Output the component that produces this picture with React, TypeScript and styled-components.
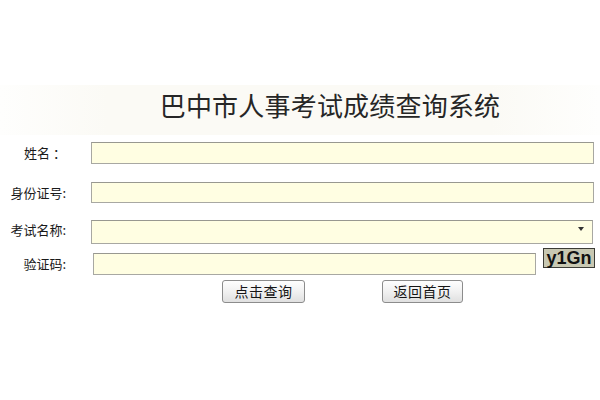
import React from 'react';
import styled, { createGlobalStyle } from 'styled-components';

const GlobalStyle = createGlobalStyle`
  html, body {
    margin: 0;
    padding: 0;
    background: #ffffff;
  }
  body {
    width: 600px;
    height: 400px;
    overflow: hidden;
    font-family: "Noto Sans CJK SC", "Liberation Sans", sans-serif;
    color: #1e1e1e;
  }
`;

const Page = styled.div`
  display: flex;
  flex-direction: column;
  padding-top: 85px;
`;

const Banner = styled.div`
  height: 50px;
  display: flex;
  align-items: center;
  justify-content: center;
  padding-left: 60px;
  background: linear-gradient(
    to right,
    #fefefd 0%,
    #fbfaf5 18%,
    #fbfaf5 82%,
    #fefefd 100%
  );
`;

const Title = styled.h1`
  margin: 0 0 10px;
  font-size: 26px;
  font-weight: 400;
  letter-spacing: 0.2px;
  color: #262626;
  line-height: 30px;
`;

const Form = styled.form`
  display: flex;
  flex-direction: column;
  padding-right: 6px;
`;

const Row = styled.div<{ $top: number }>`
  display: grid;
  grid-template-columns: 66px 1fr;
  column-gap: 25px;
  align-items: center;
  margin-top: ${(p) => p.$top}px;
`;

const Label = styled.label`
  text-align: right;
  font-size: 13px;
  line-height: 16px;
  color: #1a1a1a;
  white-space: nowrap;
`;

const Field = styled.input<{ $h?: number }>`
  box-sizing: border-box;
  width: 100%;
  height: ${(p) => p.$h ?? 22}px;
  margin: 0;
  padding: 0 4px;
  background: #fffee2;
  border: 1px solid #a8a8a2;
  border-top-color: #989890;
  outline: none;
  font-size: 13px;
`;

const SelectWrap = styled.div`
  position: relative;
  width: calc(100% - 1px);
`;

const Select = styled.select`
  box-sizing: border-box;
  width: 100%;
  height: 24px;
  margin: 0;
  padding: 0 4px;
  appearance: none;
  background: #fffee2;
  border: 1px solid #a8a8a2;
  border-top-color: #989890;
  border-radius: 0;
  outline: none;
  font-size: 13px;
`;

const Arrow = styled.span`
  position: absolute;
  right: 9px;
  top: 10px;
  width: 0;
  height: 0;
  border-left: 3px solid transparent;
  border-right: 3px solid transparent;
  border-top: 4px solid #333;
  pointer-events: none;
`;

const CodeLine = styled.div`
  display: flex;
  align-items: flex-start;
  padding-left: 2px;
`;

const CodeField = styled(Field)`
  width: 443px;
`;

const Captcha = styled.span`
  box-sizing: border-box;
  margin: -5px 0 0 7px;
  width: 52px;
  height: 20px;
  display: flex;
  align-items: center;
  justify-content: center;
  background: #c8c8b2;
  border: 1px solid #3c3c36;
  font-family: "Liberation Sans", Arial, sans-serif;
  font-weight: 700;
  font-size: 18px;
  line-height: 18px;
  color: #111;
`;

const Actions = styled.div`
  display: flex;
  justify-content: center;
  gap: 77px;
`;

const Button = styled.button<{ $w: number }>`
  box-sizing: border-box;
  width: ${(p) => p.$w}px;
  height: 23px;
  padding: 0;
  border: 1px solid #8c8c8c;
  border-radius: 3px;
  background: linear-gradient(to bottom, #fefefe 0%, #f1f1f1 50%, #e0e0e0 100%);
  font-family: "Noto Sans CJK SC", sans-serif;
  font-size: 14px;
  line-height: 20px;
  letter-spacing: 0.5px;
  color: #151515;
  cursor: pointer;
`;

export default function App() {
  return (
    <>
      <GlobalStyle />
      <Page>
        <Banner>
          <Title>巴中市人事考试成绩查询系统</Title>
        </Banner>
        <Form onSubmit={(e) => e.preventDefault()}>
          <Row $top={7}>
            <Label>姓名 ：</Label>
            <Field type="text" />
          </Row>
          <Row $top={18}>
            <Label>身份证号:</Label>
            <Field type="text" $h={21} />
          </Row>
          <Row $top={14}>
            <Label>考试名称:</Label>
            <SelectWrap>
              <Select defaultValue="">
                <option value=""></option>
              </Select>
              <Arrow />
            </SelectWrap>
          </Row>
          <Row $top={9}>
            <Label>验证码:</Label>
            <CodeLine>
              <CodeField type="text" />
              <Captcha>y1Gn</Captcha>
            </CodeLine>
          </Row>
          <Row $top={5}>
            <span />
            <Actions>
              <Button type="submit" $w={83}>点击查询</Button>
              <Button type="button" $w={81}>返回首页</Button>
            </Actions>
          </Row>
        </Form>
      </Page>
    </>
  );
}
